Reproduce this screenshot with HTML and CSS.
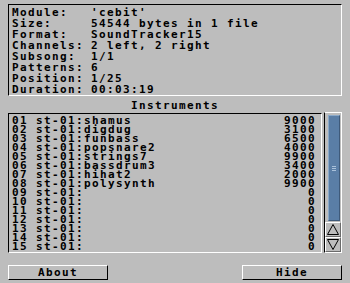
FILE: index.html
```html
<!DOCTYPE html>
<html lang="en">
<head>
<meta charset="UTF-8" />
<title>Module Info</title>
<link rel="stylesheet" href="styles.css">
</head>
<body>
  <div class="window">
    <div class="info">
      <div class="line"><span class="key">Module:</span>'cebit'</div>
      <div class="line"><span class="key">Size:</span>54544 bytes in 1 file</div>
      <div class="line"><span class="key">Format:</span>SoundTracker15</div>
      <div class="line"><span class="key">Channels:</span>2 left, 2 right</div>
      <div class="line"><span class="key">Subsong:</span>1/1</div>
      <div class="line"><span class="key">Patterns:</span>6</div>
      <div class="line"><span class="key">Position:</span>1/25</div>
      <div class="line"><span class="key">Duration:</span>00:03:19</div>
    </div>

    <div class="title">Instruments</div>

    <div class="instruments">
      <div class="list">
        <div class="row"><span>01 st-01:shamus</span><span>9000</span></div>
        <div class="row"><span>02 st-01:digdug</span><span>3100</span></div>
        <div class="row"><span>03 st-01:funbass</span><span>6500</span></div>
        <div class="row"><span>04 st-01:popsnare2</span><span>4000</span></div>
        <div class="row"><span>05 st-01:strings7</span><span>9900</span></div>
        <div class="row"><span>06 st-01:bassdrum3</span><span>3400</span></div>
        <div class="row"><span>07 st-01:hihat2</span><span>2000</span></div>
        <div class="row"><span>08 st-01:polysynth</span><span>9900</span></div>
        <div class="row"><span>09 st-01:</span><span>0</span></div>
        <div class="row"><span>10 st-01:</span><span>0</span></div>
        <div class="row"><span>11 st-01:</span><span>0</span></div>
        <div class="row"><span>12 st-01:</span><span>0</span></div>
        <div class="row"><span>13 st-01:</span><span>0</span></div>
        <div class="row"><span>14 st-01:</span><span>0</span></div>
        <div class="row"><span>15 st-01:</span><span>0</span></div>
      </div>

      <div class="scroller">
        <div class="track">
          <div class="thumb">
            <div class="grip"></div>
          </div>
        </div>
        <div class="arrow">
          <svg width="12" height="11" viewBox="0 0 12 11">
            <path d="M6 0.5 L11.5 10.5 L0.5 10.5 Z" fill="none" stroke="#000" stroke-width="1"/>
          </svg>
        </div>
        <div class="arrow">
          <svg width="12" height="11" viewBox="0 0 12 11">
            <path d="M0.5 0.5 L11.5 0.5 L6 10.5 Z" fill="none" stroke="#000" stroke-width="1"/>
          </svg>
        </div>
      </div>
    </div>

    <div class="buttons">
      <button>About</button>
      <button>Hide</button>
    </div>
  </div>
</body>
</html>
```

FILE: styles.css
```css
body {
  margin: 0;
  background: #bdbdbd;
  font-family: 'DejaVu Sans Mono', 'Liberation Mono', monospace;
  font-weight: bold;
  font-size: 11px;
  letter-spacing: 1.38px;
  color: #000;
}
.window {
  width: 350px;
  height: 283px;
  padding: 4px 8px 0 8px;
  box-sizing: border-box;
  display: flex;
  flex-direction: column;
}
.info {
  height: 92px;
  flex: none;
  box-sizing: border-box;
  border-top: 1px solid #000;
  border-left: 1px solid #000;
  border-right: 1px solid #fff;
  border-bottom: 1px solid #fff;
  padding: 2px 3px 0 3px;
}
.line {
  height: 11px;
  line-height: 11px;
  white-space: pre;
}
.key {
  display: inline-block;
  width: 79px;
}
.title {
  flex: none;
  height: 11px;
  padding-top: 5px;
  line-height: 10px;
  text-align: center;
}
.instruments {
  flex: none;
  display: flex;
  gap: 2px;
  height: 141px;
}
.list {
  width: 314px;
  box-sizing: border-box;
  border-top: 1px solid #000;
  border-left: 1px solid #000;
  border-right: 1px solid #fff;
  border-bottom: 1px solid #fff;
  padding: 2px 5px 0 3px;
  margin-top: 1px;
}
.row {
  height: 9px;
  line-height: 9px;
  display: flex;
  justify-content: space-between;
  white-space: pre;
}
.scroller {
  width: 18px;
  box-sizing: border-box;
  border-top: 1px solid #fff;
  border-left: 1px solid #000;
  border-right: 1px solid #fff;
  border-bottom: 1px solid #fff;
  display: flex;
  flex-direction: column;
}
.track {
  flex: 1;
  padding: 2px 1px 1px 3px;
}
.thumb {
  height: 100%;
  box-sizing: border-box;
  background: #5a7ea6;
  border-top: 1px solid #8aa9c9;
  border-left: 1px solid #8aa9c9;
  border-right: 1px solid #3e5a7a;
  border-bottom: 1px solid #3e5a7a;
  display: flex;
  align-items: center;
  justify-content: center;
}
.grip {
  width: 4px;
  height: 5px;
  background: repeating-linear-gradient(#a9c1da 0 1px, transparent 1px 2px);
}
.arrow {
  height: 15px;
  flex: none;
  box-sizing: border-box;
  border-top: 1px solid #fff;
  border-left: 1px solid #fff;
  border-right: 1px solid #6b6b6b;
  border-bottom: 1px solid #6b6b6b;
  display: flex;
  align-items: center;
  justify-content: center;
}
.arrow svg {
  display: block;
}
.buttons {
  flex: none;
  display: flex;
  justify-content: space-between;
  margin-top: 12px;
}
button {
  width: 100px;
  height: 15px;
  padding: 0;
  background: #bdbdbd;
  border-top: 1px solid #fff;
  border-left: 1px solid #fff;
  border-right: 1px solid #000;
  border-bottom: 1px solid #000;
  font-family: inherit;
  font-weight: bold;
  font-size: 11px;
  letter-spacing: 1.38px;
  line-height: 12px;
  color: #000;
}
```
